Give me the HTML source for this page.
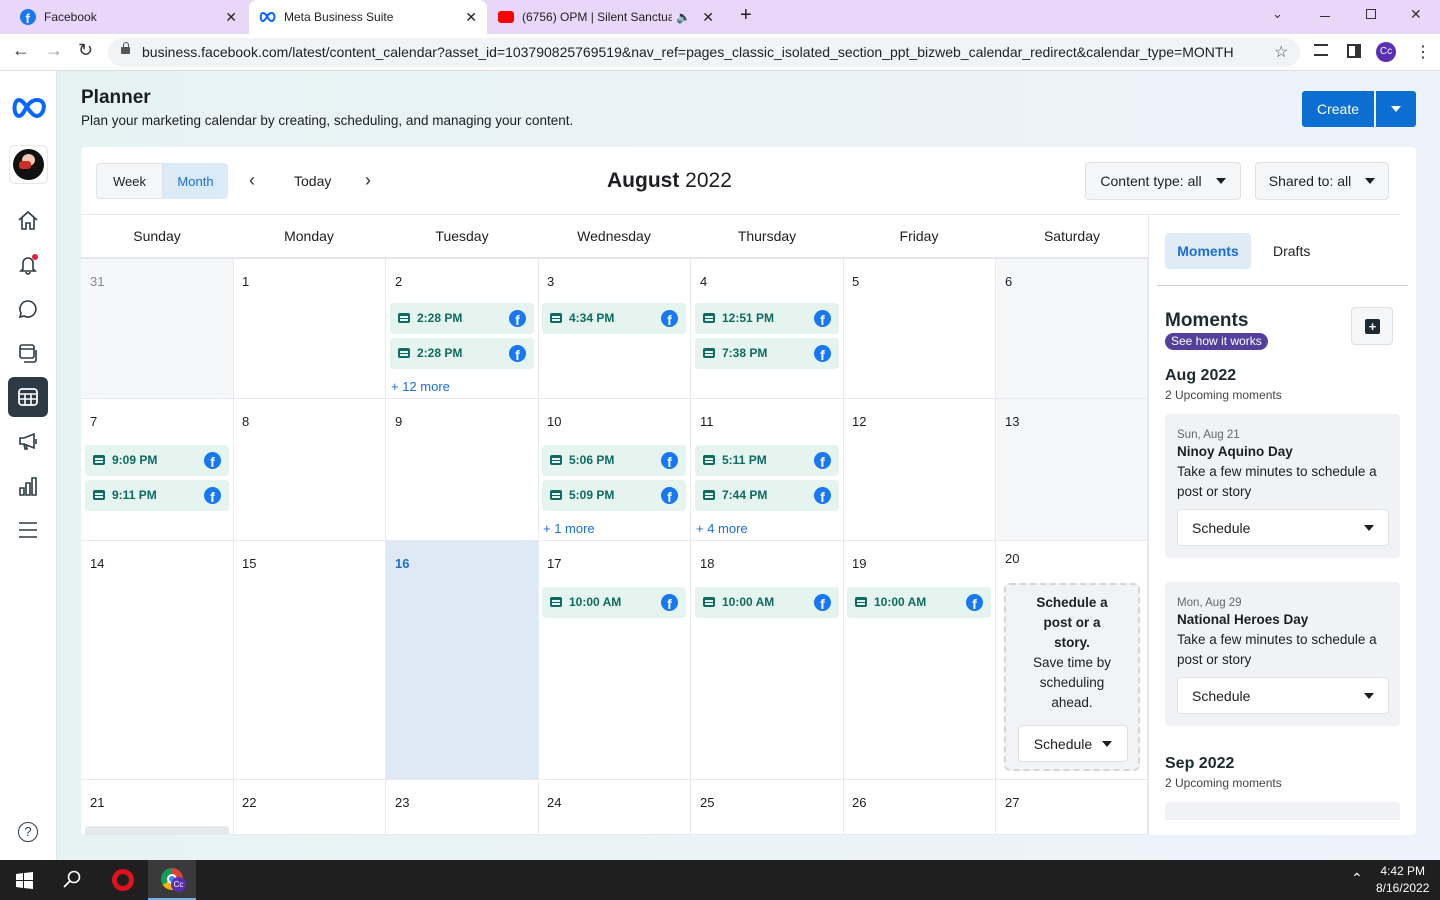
<!DOCTYPE html>
<html><head><meta charset="utf-8">
<style>
*{box-sizing:border-box;margin:0;padding:0}
body{width:1440px;height:900px;overflow:hidden;font-family:"Liberation Sans",sans-serif;color:#1c1e21;background:#fff;position:relative}
.abs{position:absolute}
.tabbar{left:0;top:0;width:1440px;height:34px;background:#e9d7f9}
.tab{top:0;height:34px;font-size:12px;color:#222;display:flex;align-items:center}
.addr{left:0;top:34px;width:1440px;height:37px;background:#fff;border-bottom:1px solid #ddd}
.url{left:108px;top:38px;width:1192px;height:29px;background:#f1f3f4;border-radius:15px;font-size:14px;color:#202124;line-height:29px;padding-left:34px;white-space:nowrap;overflow:hidden}
.side{left:0;top:71px;width:57px;height:789px;background:#fff;border-right:1px solid #e4e6eb}
.main{left:57px;top:71px;width:1383px;height:789px;background:linear-gradient(90deg,#e6f3f3,#eef3fb)}
.card{left:81px;top:147px;width:1335px;height:688px;background:#fff;border-radius:4px}
.btn{border:1px solid #dfe1e5;background:#f5f6f7;border-radius:4px;font-size:14px;color:#1c1e21;display:flex;align-items:center;justify-content:center}
.caret{display:inline-block;width:0;height:0;border-left:5px solid transparent;border-right:5px solid transparent;border-top:6px solid #1c1e21;margin-left:14px}
.dh{top:215px;height:43px;width:152px;text-align:center;font-size:14px;line-height:43px;color:#1c1e21}
.cell{border-right:1px solid #e8eaef;border-bottom:1px solid #e8eaef;width:153px}
.dn{font-size:13px;color:#1c1e21;position:absolute;left:9px;top:15px}
.chip{position:absolute;left:4px;width:144px;height:31px;background:#e5f4ef;border-radius:4px;font-size:12px;font-weight:bold;color:#0e6a63;line-height:31px;padding-left:27px}
.chip:before{content:"";position:absolute;left:8px;top:10px;width:12px;height:10px;background:#0e6a63;border-radius:2px}
.chip:after{content:"";position:absolute;left:10px;top:13px;width:8px;height:1.5px;background:#e5f4ef;box-shadow:0 3px 0 #e5f4ef}
.fb{position:absolute;right:8px;top:7px;width:17px;height:17px;border-radius:50%;background:#1877f2;color:#fff;font-size:14px;font-weight:bold;text-align:center;line-height:20px;overflow:hidden}
.more{position:absolute;left:5px;font-size:13px;color:#1a6ed8}
.icon{position:absolute;left:17px;width:22px;height:22px}
</style></head><body>
<div class="abs tabbar"></div>
<div class="abs tab" style="left:20px;width:225px"><svg width="16" height="16"><circle cx="8" cy="8" r="8" fill="#1877f2"/><text x="5.5" y="14" font-size="13" fill="#fff" font-weight="bold" font-family="Liberation Sans">f</text></svg><span style="margin-left:8px">Facebook</span><span style="position:absolute;right:8px;font-size:14px">✕</span></div>
<div class="abs tab" style="left:249px;width:238px;background:#fff;border-radius:8px 8px 0 0;padding-left:10px"><svg width="17" height="10" viewBox="0 0 17 10"><path d="M4 1C1 1 1 9 4 9S8 1 12.5 1 16 9 12.5 9 8 1 4 1Z" fill="none" stroke="#0866ff" stroke-width="2"/></svg><span style="margin-left:8px">Meta Business Suite</span><span style="position:absolute;right:10px;font-size:14px">✕</span></div>
<div class="abs tab" style="left:498px;width:228px"><span style="width:16px;height:12px;background:#f00;border-radius:3px;display:inline-block"></span><span style="margin-left:8px;width:150px;overflow:hidden;white-space:nowrap">(6756) OPM | Silent Sanctuary</span><span style="margin-left:4px">🔈</span><span style="position:absolute;right:12px;font-size:14px">✕</span></div>
<div class="abs" style="left:740px;top:4px;font-size:20px">+</div>
<div class="abs" style="left:1272px;top:6px;font-size:13px;color:#333">⌄</div>
<div class="abs" style="left:1320px;top:16px;width:10px;height:1px;background:#333"></div>
<div class="abs" style="left:1366px;top:9px;width:10px;height:10px;border:1px solid #333"></div>
<div class="abs" style="left:1410px;top:6px;font-size:14px;color:#333">✕</div>
<div class="abs addr"></div>
<div class="abs" style="left:12px;top:40px;font-size:18px;color:#333">←</div>
<div class="abs" style="left:45px;top:40px;font-size:18px;color:#999">→</div>
<div class="abs" style="left:78px;top:40px;font-size:18px;color:#333">↻</div>
<div class="abs url">business.facebook.com/latest/content_calendar?asset_id=103790825769519&amp;nav_ref=pages_classic_isolated_section_ppt_bizweb_calendar_redirect&amp;calendar_type=MONTH</div>
<div class="abs" style="left:121px;top:47px;width:9px;height:7px;background:#555;border-radius:1px"></div>
<div class="abs" style="left:122.5px;top:42px;width:6px;height:7px;border:1.5px solid #555;border-bottom:none;border-radius:3px 3px 0 0"></div>
<div class="abs" style="left:1274px;top:42px;font-size:16px;color:#555">☆</div>
<div class="abs" style="left:1314px;top:44px;width:14px;height:12px;border-top:2px solid #333;border-bottom:2px solid #333"></div>
<div class="abs" style="left:1347px;top:44px;width:14px;height:14px;border:2px solid #333;border-right-width:6px"></div>
<div class="abs" style="left:1376px;top:42px;width:20px;height:20px;border-radius:50%;background:#5b2fb5;color:#fff;font-size:10px;text-align:center;line-height:20px">Cc</div>
<div class="abs" style="left:1415px;top:42px;font-size:16px">⋮</div>

<div class="abs side"></div>
<svg class="abs" style="left:11px;top:97px" width="35" height="22" viewBox="0 0 35 22"><path d="M8 3C2 3 2 19 8 19S15 3 26 3 33 19 26 19 14 3 8 3Z" fill="none" stroke="#0866ff" stroke-width="4"/></svg>
<div class="abs" style="left:9px;top:145px;width:39px;height:39px;border:1px solid #e4e6eb;border-radius:6px;background:#fff"><div style="margin:3px;width:31px;height:31px;border-radius:50%;background:#111;position:relative"><div style="position:absolute;left:9px;top:5px;width:13px;height:12px;border-radius:50%;background:#f2c7b0"></div><div style="position:absolute;left:6px;top:12px;width:12px;height:8px;background:#c83028;border-radius:3px"></div></div></div>
<svg class="icon" style="top:209px" viewBox="0 0 22 22"><path d="M2 11L11 3l9 8M5 9v11h4v-6h4v6h4V9" fill="none" stroke="#2b3a44" stroke-width="1.6"/></svg>
<svg class="icon" style="top:253px" viewBox="0 0 22 22"><path d="M6 16V10a5 5 0 0110 0v6l2 2H4zM9 19a2 2 0 004 0" fill="none" stroke="#2b3a44" stroke-width="1.6"/><circle cx="18" cy="4" r="3" fill="#e41e3f"/></svg>
<svg class="icon" style="top:298px" viewBox="0 0 22 22"><path d="M11 3a8 8 0 11-4 15l-4 1 1-4A8 8 0 0111 3z" fill="none" stroke="#2b3a44" stroke-width="1.6"/></svg>
<svg class="icon" style="top:342px" viewBox="0 0 22 22"><rect x="3" y="3" width="14" height="13" rx="2" fill="none" stroke="#2b3a44" stroke-width="1.6"/><path d="M3 7h14M19 8v10a2 2 0 01-2 2H7" fill="none" stroke="#2b3a44" stroke-width="1.6"/></svg>
<div class="abs" style="left:8px;top:377px;width:40px;height:40px;background:#2b3a44;border-radius:6px"></div>
<svg class="icon" style="top:386px" viewBox="0 0 22 22"><rect x="2" y="3" width="18" height="16" rx="3" fill="none" stroke="#fff" stroke-width="1.8"/><path d="M2 8h18M2 13h18M8 8v11M14 8v11" stroke="#fff" stroke-width="1.6"/></svg>
<svg class="icon" style="top:430px" viewBox="0 0 22 22"><path d="M3 8h4l10-4v14L7 14H3zM7 14l1 5h2l-1-5M19 9v5" fill="none" stroke="#2b3a44" stroke-width="1.6"/></svg>
<svg class="icon" style="top:475px" viewBox="0 0 22 22"><path d="M3 13h4v7H3zM9 8h4v12H9zM15 3h4v17h-4z" fill="none" stroke="#2b3a44" stroke-width="1.6"/></svg>
<svg class="icon" style="top:519px" viewBox="0 0 22 22"><path d="M2 4h18M2 11h18M2 18h18" stroke="#2b3a44" stroke-width="1.6"/></svg>
<div class="abs" style="left:18px;top:822px;width:20px;height:20px;border:1.6px solid #2b3a44;border-radius:50%;font-size:13px;text-align:center;line-height:18px;color:#2b3a44">?</div>

<div class="abs main"></div>
<div class="abs" style="left:81px;top:87px;font-size:19px;font-weight:bold">Planner</div>
<div class="abs" style="left:81px;top:113px;font-size:13.5px">Plan your marketing calendar by creating, scheduling, and managing your content.</div>
<div class="abs" style="left:1302px;top:91px;width:72px;height:36px;background:#0a6fd0;border-radius:3px 0 0 3px;color:#fff;font-size:14px;text-align:center;line-height:36px">Create</div>
<div class="abs" style="left:1376px;top:91px;width:40px;height:36px;background:#0a6fd0;border-radius:0 3px 3px 0"><span class="caret" style="border-top-color:#fff;margin:15px 0 0 15px"></span></div>

<div class="abs card"></div>
<div class="abs btn" style="left:96px;top:163px;width:67px;height:36px;font-size:13px;border-radius:4px 0 0 4px">Week</div>
<div class="abs btn" style="left:163px;top:163px;width:65px;height:36px;font-size:13px;background:#dbeaf7;color:#1a6ed8;border-color:#dbeaf7;border-radius:0 4px 4px 0">Month</div>
<div class="abs" style="left:249px;top:170px;font-size:18px;color:#333">‹</div>
<div class="abs" style="left:294px;top:173px;font-size:14px">Today</div>
<div class="abs" style="left:365px;top:170px;font-size:18px;color:#333">›</div>
<div class="abs" style="left:607px;top:169px;font-size:21px"><b style="font-weight:600">August</b> 2022</div>
<div class="abs btn" style="left:1085px;top:162px;width:156px;height:38px">Content type: all<span class="caret"></span></div>
<div class="abs btn" style="left:1255px;top:162px;width:134px;height:38px">Shared to: all<span class="caret"></span></div>
<div class="abs" style="left:81px;top:214px;width:1319px;height:1px;background:#e8eaef"></div>
<div class="abs" style="left:81px;top:257px;width:1067px;height:2px;background:#e4e6eb"></div>
<div class="abs" style="left:1148px;top:214px;width:1px;height:621px;background:#e4e6eb"></div>

<div class="abs dh" style="left:81px">Sunday</div><div class="abs dh" style="left:233px">Monday</div><div class="abs dh" style="left:386px">Tuesday</div><div class="abs dh" style="left:538px">Wednesday</div><div class="abs dh" style="left:691px">Thursday</div><div class="abs dh" style="left:843px">Friday</div><div class="abs dh" style="left:996px">Saturday</div>

<div class="abs cell" style="left:81px;top:259px;height:140px;background:#f6f7f9"><span class="dn" style="color:#888">31</span></div>
<div class="abs cell" style="left:233px;top:259px;height:140px"><span class="dn">1</span></div>
<div class="abs cell" style="left:386px;top:259px;height:140px"><span class="dn">2</span>
<div class="chip" style="top:44px">2:28 PM<span class="fb">f</span></div><div class="chip" style="top:79px">2:28 PM<span class="fb">f</span></div><div class="more" style="top:120px">+ 12 more</div></div>
<div class="abs cell" style="left:538px;top:259px;height:140px"><span class="dn">3</span><div class="chip" style="top:44px">4:34 PM<span class="fb">f</span></div></div>
<div class="abs cell" style="left:691px;top:259px;height:140px"><span class="dn">4</span><div class="chip" style="top:44px">12:51 PM<span class="fb">f</span></div><div class="chip" style="top:79px">7:38 PM<span class="fb">f</span></div></div>
<div class="abs cell" style="left:843px;top:259px;height:140px"><span class="dn">5</span></div>
<div class="abs cell" style="left:996px;top:259px;height:140px;width:152px;background:#f6f7f9"><span class="dn">6</span></div>
<div class="abs cell" style="left:81px;top:399px;height:142px"><span class="dn">7</span><div class="chip" style="top:46px">9:09 PM<span class="fb">f</span></div><div class="chip" style="top:81px">9:11 PM<span class="fb">f</span></div></div>
<div class="abs cell" style="left:233px;top:399px;height:142px"><span class="dn">8</span></div>
<div class="abs cell" style="left:386px;top:399px;height:142px"><span class="dn">9</span></div>
<div class="abs cell" style="left:538px;top:399px;height:142px"><span class="dn">10</span><div class="chip" style="top:46px">5:06 PM<span class="fb">f</span></div><div class="chip" style="top:81px">5:09 PM<span class="fb">f</span></div><div class="more" style="top:122px">+ 1 more</div></div>
<div class="abs cell" style="left:691px;top:399px;height:142px"><span class="dn">11</span><div class="chip" style="top:46px">5:11 PM<span class="fb">f</span></div><div class="chip" style="top:81px">7:44 PM<span class="fb">f</span></div><div class="more" style="top:122px">+ 4 more</div></div>
<div class="abs cell" style="left:843px;top:399px;height:142px"><span class="dn">12</span></div>
<div class="abs cell" style="left:996px;top:399px;height:142px;width:152px;background:#f6f7f9"><span class="dn">13</span></div>
<div class="abs cell" style="left:81px;top:541px;height:239px"><span class="dn">14</span></div>
<div class="abs cell" style="left:233px;top:541px;height:239px"><span class="dn">15</span></div>
<div class="abs cell" style="left:386px;top:541px;height:239px;background:#dde9f4"><span class="dn" style="color:#1a6ed8;font-weight:bold">16</span></div>
<div class="abs cell" style="left:538px;top:541px;height:239px"><span class="dn">17</span><div class="chip" style="top:46px">10:00 AM<span class="fb">f</span></div></div>
<div class="abs cell" style="left:691px;top:541px;height:239px"><span class="dn">18</span><div class="chip" style="top:46px">10:00 AM<span class="fb">f</span></div></div>
<div class="abs cell" style="left:843px;top:541px;height:239px"><span class="dn">19</span><div class="chip" style="top:46px">10:00 AM<span class="fb">f</span></div></div>
<div class="abs cell" style="left:996px;top:541px;height:239px;width:152px"><span class="dn" style="top:10px">20</span>
<div style="position:absolute;left:8px;top:42px;width:136px;height:188px;border:2px dashed #d4d6da;border-radius:6px;background:#f2f3f5;text-align:center;font-size:13.5px;line-height:20px;padding-top:8px"><b>Schedule a<br>post or a<br>story.</b><br>Save time by<br>scheduling<br>ahead.
<div class="btn" style="position:absolute;left:12px;top:140px;width:110px;height:37px;background:#fff">Schedule<span class="caret" style="margin-left:10px"></span></div></div></div>
<div class="abs cell" style="left:81px;top:780px;height:55px"><span class="dn">21</span><div style="position:absolute;left:4px;top:46px;width:144px;height:9px;background:#e5e9ee;border-radius:4px 4px 0 0"></div></div>
<div class="abs cell" style="left:233px;top:780px;height:55px"><span class="dn">22</span></div>
<div class="abs cell" style="left:386px;top:780px;height:55px"><span class="dn">23</span></div>
<div class="abs cell" style="left:538px;top:780px;height:55px"><span class="dn">24</span></div>
<div class="abs cell" style="left:691px;top:780px;height:55px"><span class="dn">25</span></div>
<div class="abs cell" style="left:843px;top:780px;height:55px"><span class="dn">26</span></div>
<div class="abs cell" style="left:996px;top:780px;height:55px;width:152px"><span class="dn">27</span></div>

<div class="abs" style="left:1165px;top:233px;width:86px;height:36px;background:#dfebf5;border-radius:4px;color:#1a6ed8;font-weight:bold;font-size:14px;text-align:center;line-height:36px">Moments</div>
<div class="abs" style="left:1273px;top:243px;font-size:14px">Drafts</div>
<div class="abs" style="left:1157px;top:285px;width:251px;height:1px;background:#ccd0d5"></div>
<div class="abs" style="left:1165px;top:310px;font-size:19px;font-weight:bold;color:#1c2b33">Moments</div>
<div class="abs" style="left:1165px;top:333px;height:17px;padding:0 6px;background:#54409c;color:#fff;border-radius:9px;font-size:12px;line-height:17px">See how it works</div>
<div class="abs" style="left:1351px;top:307px;width:42px;height:38px;border:1px solid #dfe1e5;border-radius:4px;background:#f5f6f7"><div style="margin:11px 0 0 13px;width:15px;height:15px;background:#1c2b33;border-radius:2px;color:#fff;font-size:13px;line-height:15px;text-align:center;font-weight:bold">+</div></div>
<div class="abs" style="left:1165px;top:367px;font-size:16px;font-weight:bold;color:#1c2b33">Aug 2022</div>
<div class="abs" style="left:1165px;top:388px;font-size:12px;color:#444">2 Upcoming moments</div>
<div class="abs" style="left:1165px;top:414px;width:235px;height:144px;background:#f0f2f5;border-radius:4px;padding:14px 12px;font-size:13.5px;line-height:20px">
<div style="font-size:11.5px;color:#65676b;line-height:14px">Sun, Aug 21</div><b>Ninoy Aquino Day</b><br>Take a few minutes to schedule a post or story
<div class="btn" style="position:absolute;left:12px;top:95px;width:212px;height:37px;background:#fff;justify-content:space-between;padding:0 14px">Schedule<span class="caret"></span></div></div>
<div class="abs" style="left:1165px;top:582px;width:235px;height:144px;background:#f0f2f5;border-radius:4px;padding:14px 12px;font-size:13.5px;line-height:20px">
<div style="font-size:11.5px;color:#65676b;line-height:14px">Mon, Aug 29</div><b>National Heroes Day</b><br>Take a few minutes to schedule a post or story
<div class="btn" style="position:absolute;left:12px;top:95px;width:212px;height:37px;background:#fff;justify-content:space-between;padding:0 14px">Schedule<span class="caret"></span></div></div>
<div class="abs" style="left:1165px;top:755px;font-size:16px;font-weight:bold;color:#1c2b33">Sep 2022</div>
<div class="abs" style="left:1165px;top:776px;font-size:12px;color:#444">2 Upcoming moments</div>
<div class="abs" style="left:1165px;top:802px;width:235px;height:18px;background:#f0f2f5;border-radius:4px 4px 0 0"></div>

<div class="abs" style="left:0;top:860px;width:1440px;height:40px;background:#1f1f1f"></div>
<svg class="abs" style="left:16px;top:872px" width="17" height="17"><path d="M0 2l7-1v7H0zM8 1l9-1v8H8zM0 9h7v7l-7-1zM8 9h9v8l-9-1z" fill="#fff"/></svg>
<svg class="abs" style="left:62px;top:869px" width="20" height="20"><circle cx="12" cy="8" r="5.5" fill="none" stroke="#fff" stroke-width="1.6"/><path d="M8 12l-6 6" stroke="#fff" stroke-width="1.8"/></svg>
<div class="abs" style="left:112px;top:869px;width:22px;height:22px;border-radius:50%;border:5px solid #e0121b"></div>
<div class="abs" style="left:148px;top:860px;width:48px;height:40px;background:#3a3a3a;border-bottom:2px solid #6fb0e8"></div>
<div class="abs" style="left:161px;top:868px;width:22px;height:22px;border-radius:50%;background:conic-gradient(#db4437 0 33%,#f4b400 0 66%,#0f9d58 0)"><div style="margin:6px;width:10px;height:10px;border-radius:50%;background:#4285f4;border:2px solid #fff"></div></div>
<div class="abs" style="left:171px;top:877px;width:15px;height:15px;border-radius:50%;background:#5b2fb5;color:#fff;font-size:8px;text-align:center;line-height:15px">Cc</div>
<div class="abs" style="left:1351px;top:870px;color:#fff;font-size:14px">⌃</div>
<div class="abs" style="left:1376px;top:863px;color:#fff;font-size:12px;text-align:center;line-height:17px">4:42 PM<br>8/16/2022</div>
</body></html>
